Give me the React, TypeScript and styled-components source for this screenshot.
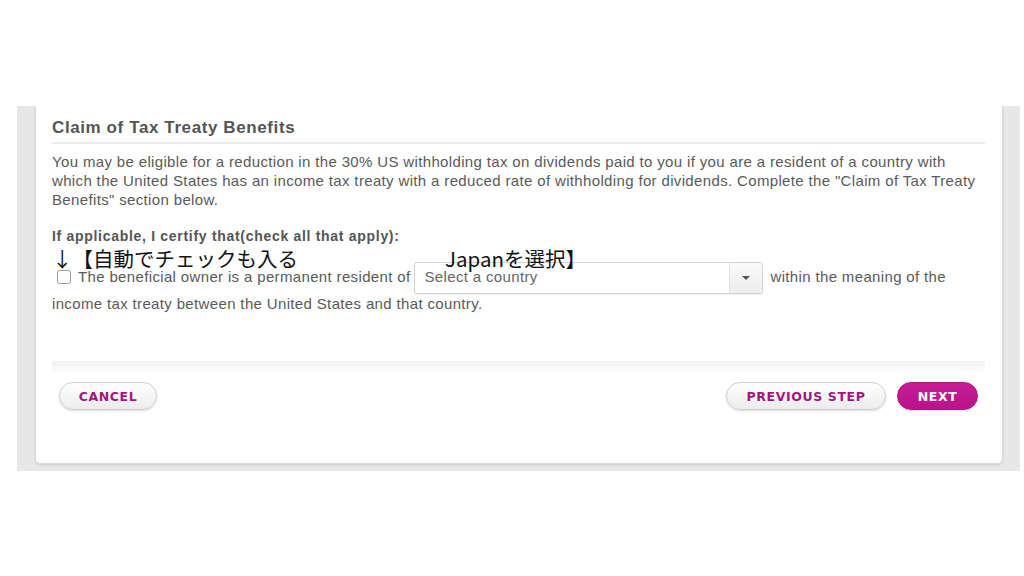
import React from 'react';
import styled, { createGlobalStyle } from 'styled-components';

const GlobalStyle = createGlobalStyle`
  html, body {
    margin: 0;
    padding: 0;
    background: #ffffff;
  }
  body {
    font-family: "Liberation Sans", Arial, Helvetica, sans-serif;
    color: #555;
  }
`;

const Page = styled.div`
  width: 1024px;
  height: 576px;
  padding-top: 106px;
  box-sizing: border-box;
`;

const Backdrop = styled.div`
  margin-left: 17px;
  width: 1003px;
  background: #e7e7e7;
  padding: 0 17px 7px 18px;
  box-sizing: border-box;
`;

const Card = styled.div`
  background: #fff;
  border: 1px solid #dadada;
  border-top: none;
  border-radius: 0 0 5px 5px;
  box-shadow: 0 1px 2px rgba(0,0,0,0.12);
  padding: 12px 17px 53px 16px;
`;

const Title = styled.h2`
  margin: 0;
  font-size: 17px;
  letter-spacing: 0.6px;
  line-height: 20px;
  font-weight: bold;
  color: #555;
  padding-bottom: 4px;
  border-bottom: 2px solid #ececec;
`;

const Intro = styled.p`
  margin: 8px 0 0;
  font-size: 15px;
  letter-spacing: 0.35px;
  line-height: 19px;
  color: #5a5a5a;
`;

const Certify = styled.div`
  position: relative;
  margin-top: 19px;
`;

const Label = styled.div`
  font-size: 14px;
  letter-spacing: 0.7px;
  line-height: 16px;
  font-weight: bold;
  color: #555;
`;

const Statement = styled.p`
  margin: 18px 0 0;
  font-size: 15px;
  letter-spacing: 0.35px;
  line-height: 19px;
  color: #5a5a5a;
`;

const Box = styled.span`
  display: inline-block;
  width: 12px;
  height: 12px;
  border: 1px solid #9a9a9a;
  border-radius: 3px;
  background: #fff;
  margin: 0 7px 0 5px;
  vertical-align: -2px;
`;

const Select = styled.span`
  display: inline-flex;
  width: 349px;
  height: 32px;
  box-sizing: border-box;
  border: 1px solid #d4d4d4;
  border-radius: 3px;
  background: #fff;
  margin: 0 7px 0 4px;
  vertical-align: middle;
  box-shadow: 0 1px 1px rgba(0,0,0,0.06);
`;

const SelectText = styled.span`
  flex: 1;
  padding: 0 9px;
  line-height: 28px;
  color: #666;
  font-size: 15px;
`;

const Caret = styled.span`
  width: 32px;
  border-left: 1px solid #e2e2e2;
  background: linear-gradient(#fafafa, #ededed);
  display: flex;
  align-items: center;
  justify-content: center;
  border-radius: 0 3px 3px 0;
  &::after {
    content: "";
    border-left: 4px solid transparent;
    border-right: 4px solid transparent;
    border-top: 4px solid #555;
  }
`;

const Note = styled.span<{ left: number }>`
  position: absolute;
  top: 19px;
  left: ${p => p.left}px;
  font-family: "Noto Sans CJK JP", "Liberation Sans", sans-serif;
  font-size: 20.5px;
  line-height: 22px;
  color: #111;
  white-space: nowrap;
`;

const Divider = styled.div`
  margin-top: 48px;
  height: 13px;
  background: linear-gradient(#f1f1f1, #fbfbfb 70%, #fff);
`;

const Actions = styled.div`
  display: flex;
  align-items: center;
  gap: 11px;
  padding: 8px 7px 0;
`;

const Spacer = styled.div`
  flex: 1;
`;

const Button = styled.button<{ primary?: boolean; w: number }>`
  width: ${p => p.w}px;
  height: 28px;
  border-radius: 14px;
  font-family: "DejaVu Sans", "Liberation Sans", sans-serif;
  font-weight: bold;
  font-size: 12.5px;
  letter-spacing: 0.6px;
  cursor: pointer;
  padding: 0;
  color: ${p => (p.primary ? '#fff' : '#a3167f')};
  border: 1px solid ${p => (p.primary ? '#b0167f' : '#cfcfcf')};
  background: ${p => (p.primary ? 'linear-gradient(#c81d94, #b8148a)' : 'linear-gradient(#ffffff, #ececec)')};
  box-shadow: 0 1px 2px rgba(0,0,0,0.15);
`;

export default function App() {
  return (
    <Page>
      <GlobalStyle />
      <Backdrop>
        <Card>
          <Title>Claim of Tax Treaty Benefits</Title>
          <Intro>
            You may be eligible for a reduction in the 30% US withholding tax on dividends paid to you if you are a resident of a country with
            which the United States has an income tax treaty with a reduced rate of withholding for dividends. Complete the "Claim of Tax Treaty
            Benefits" section below.
          </Intro>
          <Certify>
            <Label>If applicable, I certify that(check all that apply):</Label>
            <Statement>
              <Box />
              The beneficial owner is a permanent resident of
              <Select>
                <SelectText>Select a country</SelectText>
                <Caret />
              </Select>
              within the meaning of the income tax treaty between the United States and that country.
            </Statement>
            <Note left={0}>↓【自動でチェックも入る</Note>
            <Note left={393}>Japanを選択】</Note>
          </Certify>
          <Divider />
          <Actions>
            <Button w={98}>CANCEL</Button>
            <Spacer />
            <Button w={160}>PREVIOUS STEP</Button>
            <Button w={81} primary>NEXT</Button>
          </Actions>
        </Card>
      </Backdrop>
    </Page>
  );
}
